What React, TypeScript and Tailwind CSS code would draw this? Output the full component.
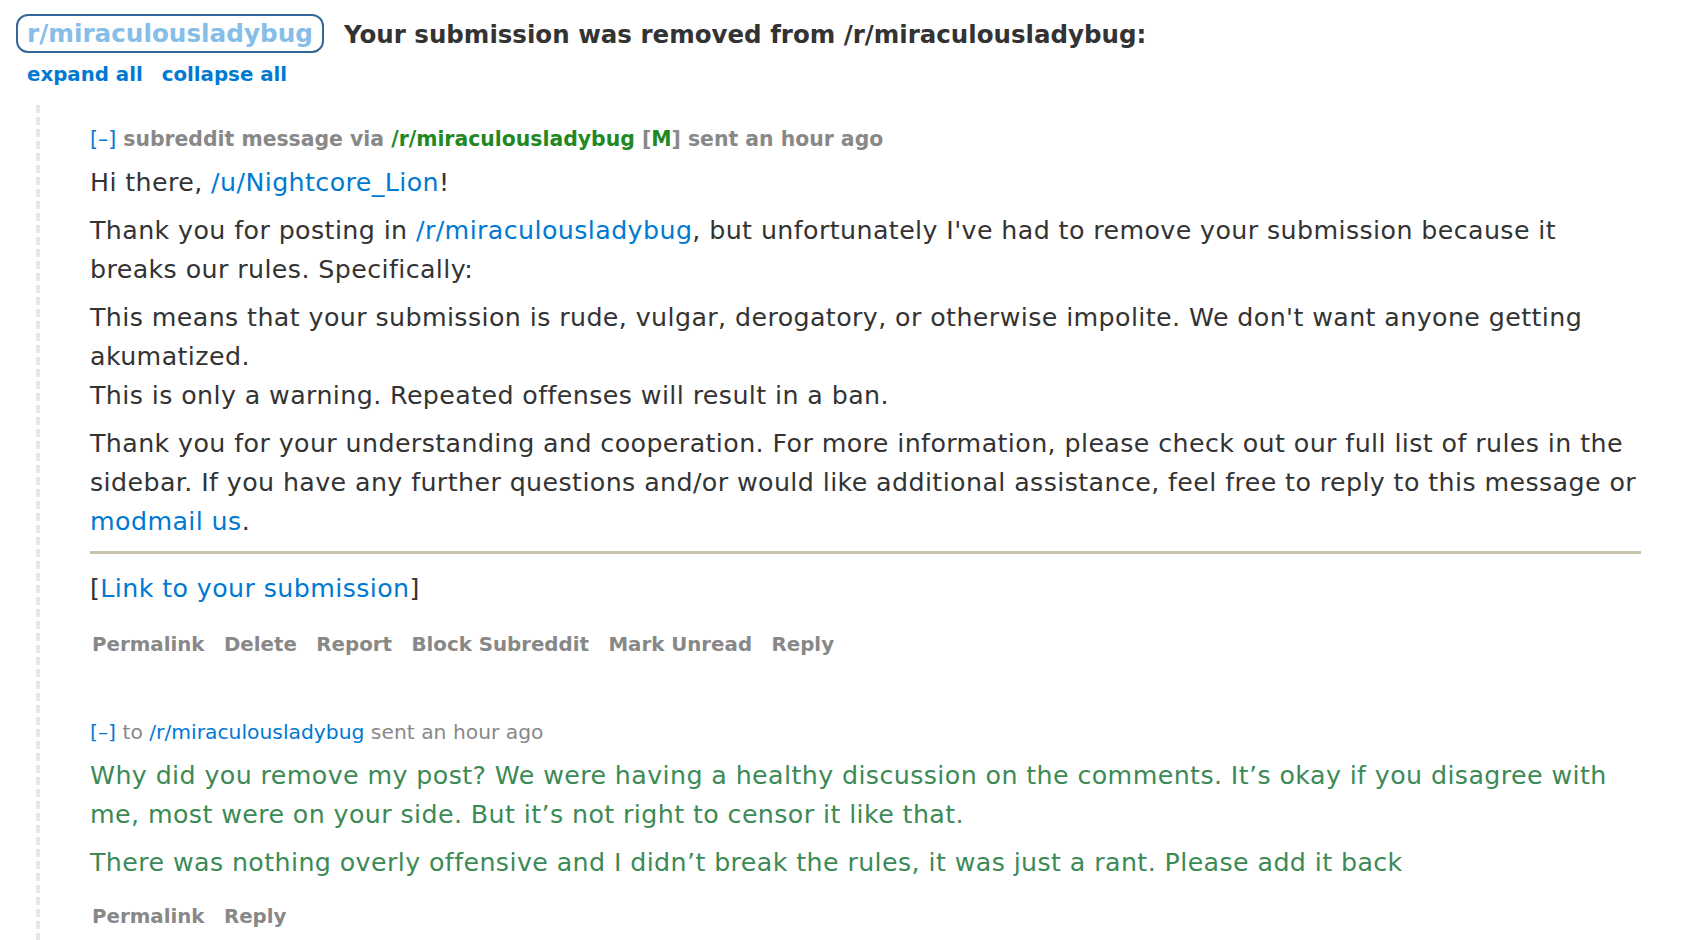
import { useState } from 'react';

const font = { fontFamily: '"DejaVu Sans", Verdana, sans-serif' };

function MetaButtons({ items }: { items: string[] }) {
  return (
    <div className="flex gap-[19.5px] pl-[2px] text-[19.8px] font-bold text-[#888]">
      {items.map((b) => (
        <a key={b} className="cursor-pointer hover:underline">{b}</a>
      ))}
    </div>
  );
}

function Toggle({ open, onClick }: { open: boolean; onClick: () => void }) {
  return (
    <a onClick={onClick} className="cursor-pointer font-normal text-[#0079d3]">
      [{open ? '–' : '+'}]
    </a>
  );
}

export default function App() {
  const [first, setFirst] = useState(true);
  const [second, setSecond] = useState(true);

  return (
    <div className="min-h-screen overflow-hidden bg-white text-[#333]" style={font}>
      <div className="flex items-center gap-[20px] pl-[16px] pt-[13px]">
        <span className="flex h-[39px] items-center rounded-[12px] border-2 border-[#336699] px-[9px] text-[24.7px] font-bold text-[#86bde9]">
          r/miraculousladybug
        </span>
        <h1 className="mt-[4px] text-[24.5px] font-bold text-[#333]">
          Your submission was removed from /r/miraculousladybug:
        </h1>
      </div>

      <div className="flex gap-[19px] pl-[27px] pt-[6px] text-[19.8px] font-bold text-[#0079d3]">
        <a className="cursor-pointer" onClick={() => { setFirst(true); setSecond(true); }}>expand all</a>
        <a className="cursor-pointer" onClick={() => { setFirst(false); setSecond(false); }}>collapse all</a>
      </div>

      <div className="ml-[36px] mt-[16px] flex pr-[53px]">
        <div className="w-[4px] shrink-0 bg-[repeating-linear-gradient(to_bottom,#e6e6e6_0px,#e6e6e6_8px,transparent_8px,transparent_12px)]" />
        <div className="flex-1 pl-[50px] pt-[19px]">
          {/* mod message */}
          <div className="text-[20.4px] font-bold text-[#888]">
            <Toggle open={first} onClick={() => setFirst(!first)} /> subreddit message via{' '}
            <a className="text-[#228822]">/r/miraculousladybug</a>{' '}
            <span>
              [<span className="text-[#228822]">M</span>]
            </span>{' '}
            sent an hour ago
          </div>
          {first && (
            <>
              <div className="mt-[8px] text-[25.3px] leading-[39px] tracking-[0.4px] text-[#333]">
                <p>
                  Hi there, <a className="text-[#0079d3]">/u/Nightcore_Lion</a>!
                </p>
                <p className="mt-[9px]">
                  Thank you for posting in <a className="text-[#0079d3]">/r/miraculousladybug</a>, but unfortunately I've had to remove your submission because it breaks our rules. Specifically:
                </p>
                <p className="mt-[9px]">
                  This means that your submission is rude, vulgar, derogatory, or otherwise impolite. We don't want anyone getting akumatized.
                  <br />
                  This is only a warning. Repeated offenses will result in a ban.
                </p>
                <p className="mt-[9px]">
                  Thank you for your understanding and cooperation. For more information, please check out our full list of rules in the sidebar. If you have any further questions and/or would like additional assistance, feel free to reply to this message or{' '}
                  <a className="text-[#0079d3]">modmail us</a>.
                </p>
                <hr className="mt-[10px] border-t-[3px] border-[#c8c3ae]" />
                <p className="mt-[15px]">
                  [<a className="text-[#0079d3]">Link to your submission</a>]
                </p>
              </div>
              <div className="mt-[22px]">
                <MetaButtons items={['Permalink', 'Delete', 'Report', 'Block Subreddit', 'Mark Unread', 'Reply']} />
              </div>
            </>
          )}

          {/* user reply */}
          <div className="mt-[57px] text-[20.3px] text-[#888]">
            <Toggle open={second} onClick={() => setSecond(!second)} /> to{' '}
            <a className="text-[#0079d3]">/r/miraculousladybug</a> sent an hour ago
          </div>
          {second && (
            <>
              <div className="mt-[9px] text-[25.3px] leading-[39px] tracking-[0.4px] text-[#3c8a55]">
                <p>
                  Why did you remove my post? We were having a healthy discussion on the comments. It’s okay if you disagree with me, most were on your side. But it’s not right to censor it like that.
                </p>
                <p className="mt-[9px]">
                  There was nothing overly offensive and I didn’t break the rules, it was just a rant. Please add it back
                </p>
              </div>
              <div className="mt-[20px] pb-[40px]">
                <MetaButtons items={['Permalink', 'Reply']} />
              </div>
            </>
          )}
        </div>
      </div>
    </div>
  );
}
